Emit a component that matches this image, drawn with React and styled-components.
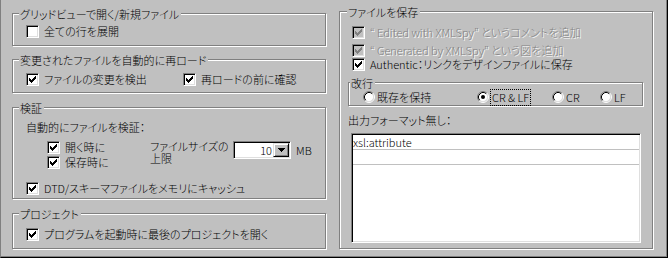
import React from "react";
import styled, { createGlobalStyle } from "styled-components";

const GlobalStyle = createGlobalStyle`
  html, body {
    margin: 0;
    padding: 0;
    background: #c0c0c0;
  }
  * {
    box-sizing: border-box;
  }
`;

const CHECK_PATH =
  "M6 0h1v1h-1z M5 1h2v1h-2z M0 2h1v1h-1z M4 2h3v1h-3z M0 3h2v1h-2z M3 3h3v1h-3z M0 4h5v1h-5z M1 5h3v1h-3z M2 6h1v1h-1z";

const Checkbox = ({ checked, disabled, label, width }) => (
  <CheckItem $w={width}>
    <Box $disabled={disabled}>
      {checked && (
        <svg width="7" height="7" viewBox="0 0 7 7" shapeRendering="crispEdges">
          <path d={CHECK_PATH} fill={disabled ? "#808080" : "#000"} />
        </svg>
      )}
    </Box>
    <Label $disabled={disabled}>{label}</Label>
  </CheckItem>
);

const Radio = ({ checked, label, width, focus }) => (
  <RadioItem $w={width}>
    <svg width="12" height="12" viewBox="0 0 12 12">
      <circle cx="6" cy="6" r="4.5" fill="#fff" />
      <path d="M2.11 9.89A5.5 5.5 0 0 1 9.89 2.11" stroke="#808080" fill="none" />
      <path d="M9.89 2.11A5.5 5.5 0 0 1 2.11 9.89" stroke="#fff" fill="none" />
      <path d="M2.82 9.18A4.5 4.5 0 0 1 9.18 2.82" stroke="#000" fill="none" />
      <path d="M9.18 2.82A4.5 4.5 0 0 1 2.82 9.18" stroke="#dfdfdf" fill="none" />
      {checked && <circle cx="6" cy="6" r="2" fill="#000" />}
    </svg>
    <Label $focus={focus}>{label}</Label>
  </RadioItem>
);

const App = () => {
  return (
    <>
      <GlobalStyle />
      <Page>
        <Column $pt={13} $w={314}>
          <Group $h={33}>
            <Legend>グリッドビューで開く/新規ファイル</Legend>
            <Row $mt={3} $ml={13}>
              <Checkbox label="全ての行を展開" />
            </Row>
          </Group>

          <Group $h={34} $mt={13}>
            <Legend>変更されたファイルを自動的に再ロード</Legend>
            <Row $mt={5} $ml={13}>
              <Checkbox checked label="ファイルの変更を検出" width={157} />
              <Checkbox checked label="再ロードの前に確認" />
            </Row>
          </Group>

          <Group $h={92} $mt={14}>
            <Legend>検証</Legend>
            <Row $mt={5} $ml={13}>
              <Label>自動的にファイルを検証：</Label>
            </Row>
            <SizeArea>
              <SubChecks>
                <Row $h={15}>
                  <Checkbox checked label="開く時に" />
                </Row>
                <Row $h={15}>
                  <Checkbox checked label="保存時に" />
                </Row>
              </SubChecks>
              <SizeText>
                ファイルサイズの
                <br />
                上限
              </SizeText>
              <Combo>
                <ComboValue>10</ComboValue>
                <ComboButton>
                  <svg width="7" height="4" viewBox="0 0 7 4" shapeRendering="crispEdges">
                    <path d="M0 0h7v1h-7z M1 1h5v1h-5z M2 2h3v1h-3z M3 3h1v1h-1z" fill="#000" />
                  </svg>
                </ComboButton>
              </Combo>
              <Unit>MB</Unit>
            </SizeArea>
            <Row $mt={11} $ml={13}>
              <Checkbox checked label="DTD/スキーマファイルをメモリにキャッシュ" />
            </Row>
          </Group>

          <Group $h={36} $mt={14}>
            <Legend>プロジェクト</Legend>
            <Row $mt={6} $ml={13}>
              <Checkbox checked label="プログラムを起動時に最後のプロジェクトを開く" />
            </Row>
          </Group>
        </Column>

        <Column $pt={11} $ml={13} $w={314}>
          <Group $h={238}>
            <Legend $ml={7}>ファイルを保存</Legend>
            <Row $mt={6} $ml={12}>
              <Checkbox checked disabled label="“ Edited with XMLSpy” というコメントを追加" />
            </Row>
            <Row $mt={4} $ml={12}>
              <Checkbox checked disabled label="“ Generated by XMLSpy” という図を追加" />
            </Row>
            <Row $ml={12}>
              <Checkbox checked label="Authentic：リンクをデザインファイルに保存" />
            </Row>

            <Group $h={24} $w={295} $mt={11} $ml={8}>
              <Legend $ml={1}>改行</Legend>
              <Row $mt={1} $ml={14} $h={12}>
                <Radio label="既存を保持" width={114} />
                <Radio checked focus label="CR & LF" width={75} />
                <Radio label="CR" width={48} />
                <Radio label="LF" />
              </Row>
            </Group>

            <Row $mt={7} $ml={8}>
              <Label>出力フォーマット無し：</Label>
            </Row>
            <ListBox>
              <ListRow>xsl:attribute</ListRow>
              <ListRow />
            </ListBox>
          </Group>
        </Column>
      </Page>
    </>
  );
};

const Page = styled.div`
  width: 668px;
  height: 258px;
  display: flex;
  align-items: flex-start;
  padding-left: 11px;
  background: #c0c0c0;
  border-left: 1px solid #808080;
  border-right: 1px solid #000;
  border-bottom: 1px solid #000;
  box-shadow: inset -1px -1px 0 #808080;
  font-family: "Noto Sans CJK JP", "Noto Sans", sans-serif;
  font-size: 11px;
  font-weight: 300;
  font-feature-settings: "palt";
  color: #000;
  overflow: hidden;
`;

const Column = styled.div`
  display: flex;
  flex-direction: column;
  width: ${(p) => p.$w}px;
  padding-top: ${(p) => p.$pt}px;
  margin-left: ${(p) => p.$ml || 0}px;
`;

const Group = styled.div`
  display: flex;
  flex-direction: column;
  flex-shrink: 0;
  height: ${(p) => p.$h}px;
  width: ${(p) => (p.$w ? `${p.$w}px` : "auto")};
  margin-top: ${(p) => p.$mt || 0}px;
  margin-left: ${(p) => p.$ml || 0}px;
  border: 1px solid #808080;
  box-shadow: 1px 1px 0 #fff, inset 1px 1px 0 #fff;
`;

const Legend = styled.div`
  align-self: flex-start;
  margin: -7px 0 0 ${(p) => p.$ml ?? 6}px;
  padding: 0 2px 0 1px;
  height: 14px;
  line-height: 14px;
  background: #c0c0c0;
  white-space: nowrap;
`;

const Row = styled.div`
  display: flex;
  align-items: center;
  flex-shrink: 0;
  height: ${(p) => p.$h || 14}px;
  margin-top: ${(p) => p.$mt || 0}px;
  margin-left: ${(p) => p.$ml || 0}px;
`;

const CheckItem = styled.label`
  display: flex;
  align-items: center;
  gap: 5px;
  width: ${(p) => (p.$w ? `${p.$w}px` : "auto")};
  flex-shrink: 0;
`;

const RadioItem = styled.label`
  display: flex;
  align-items: center;
  gap: 2px;
  width: ${(p) => (p.$w ? `${p.$w}px` : "auto")};
  flex-shrink: 0;
`;

const Box = styled.span`
  display: flex;
  width: 13px;
  height: 13px;
  padding: 2px;
  flex-shrink: 0;
  border: 1px solid;
  border-color: #808080 #fff #fff #808080;
  box-shadow: inset 1px 1px 0 #000, inset -1px -1px 0 #dfdfdf;
  background: ${(p) => (p.$disabled ? "#c0c0c0" : "#fff")};
`;

const Label = styled.span`
  line-height: 13px;
  white-space: nowrap;
  color: ${(p) => (p.$disabled ? "#808080" : "#000")};
  text-shadow: ${(p) => (p.$disabled ? "1px 1px 0 #fff" : "none")};
  padding: ${(p) => (p.$focus ? "1px 1px" : "0")};
  outline: ${(p) => (p.$focus ? "1px dotted #000" : "none")};
`;

const SizeArea = styled.div`
  display: flex;
  align-items: flex-start;
  margin: 6px 0 0 34px;
`;

const SubChecks = styled.div`
  display: flex;
  flex-direction: column;
  width: 103px;
`;

const SizeText = styled.div`
  width: 83px;
  line-height: 12px;
  white-space: nowrap;
`;

const Combo = styled.div`
  display: flex;
  width: 58px;
  height: 18px;
  margin-top: 1px;
  padding: 1px;
  border: 1px solid;
  border-color: #808080 #fff #fff #808080;
  box-shadow: inset 1px 1px 0 #000, inset -1px -1px 0 #dfdfdf;
  background: #fff;
`;

const ComboValue = styled.div`
  flex: 1;
  text-align: right;
  padding-right: 1px;
  line-height: 14px;
`;

const ComboButton = styled.div`
  display: flex;
  align-items: center;
  justify-content: center;
  width: 16px;
  height: 14px;
  background: #c0c0c0;
  border: 1px solid;
  border-color: #dfdfdf #000 #000 #dfdfdf;
  box-shadow: inset 1px 1px 0 #fff, inset -1px -1px 0 #808080;
`;

const Unit = styled.span`
  margin: 3px 0 0 5px;
  line-height: 14px;
`;

const ListBox = styled.div`
  width: 290px;
  height: 110px;
  margin: 6px 0 0 11px;
  padding: 1px;
  border: 1px solid;
  border-color: #808080 #fff #fff #808080;
  box-shadow: inset 1px 1px 0 #000, inset -1px -1px 0 #dfdfdf;
  background: #fff;
`;

const ListRow = styled.div`
  height: 15px;
  line-height: 14px;
  border-bottom: 1px solid #c0c0c0;
  white-space: nowrap;
`;

export default App;
